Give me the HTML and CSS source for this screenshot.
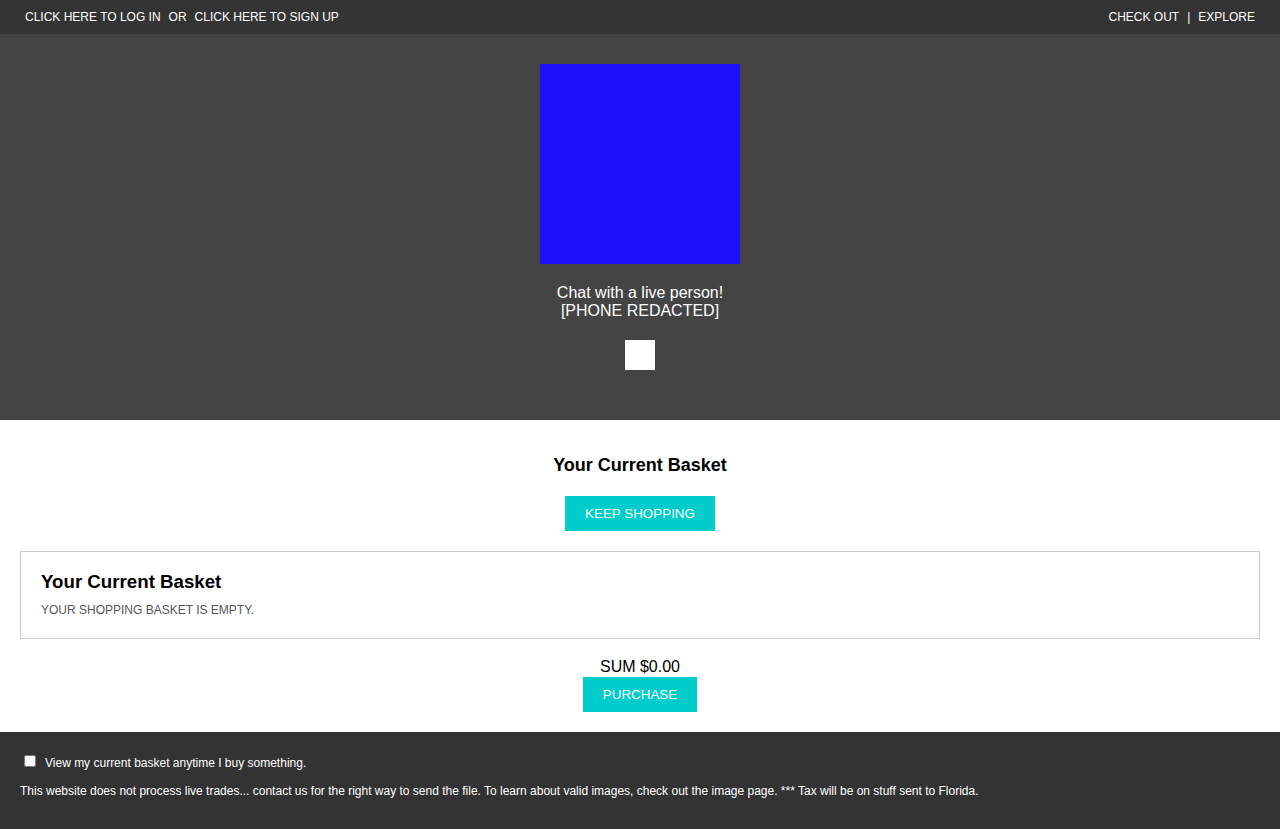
FILE: index.html
```html
<!DOCTYPE html>
<html>
<head>
<meta charset="utf-8">
<link rel="stylesheet" href="styles.css">
</head>
<body>
<div class="topbar">
  <div class="topbar-left">
    <a href="#">CLICK HERE TO LOG IN</a><span class="sep">OR</span><a href="#">CLICK HERE TO SIGN UP</a>
  </div>
  <div class="topbar-right">
    <a href="#">CHECK OUT</a><span class="sep">|</span><a href="#">EXPLORE</a>
  </div>
</div>
<div class="hero">
  <div class="logo"></div>
  <div class="chat">Chat with a live person!<br>[PHONE REDACTED]</div>
  <div class="chat-icon"></div>
</div>
<div class="main">
  <h3 class="title">Your Current Basket</h3>
  <a class="btn btn-keep" href="#">KEEP SHOPPING</a>
  <div class="basket">
    <h2 class="basket-title">Your Current Basket</h2>
    <div class="basket-empty">YOUR SHOPPING BASKET IS EMPTY.</div>
  </div>
  <div class="sum">SUM $0.00</div>
  <a class="btn btn-purchase" href="#">PURCHASE</a>
</div>
<div class="footer">
  <label class="check"><input type="checkbox"> View my current basket anytime I buy something.</label>
  <div class="note">This website does not process live trades... contact us for the right way to send the file. To learn about valid images, check out the image page. *** Tax will be on stuff sent to Florida.</div>
</div>
</body>
</html>
```
FILE: styles.css
```css
* { box-sizing: border-box; }
html, body { margin: 0; padding: 0; }
body {
  font-family: "Liberation Sans", Arial, sans-serif;
  background: #fff;
  color: #000;
}
a { color: inherit; text-decoration: none; }

.topbar {
  height: 34px;
  background: #343434;
  color: #fff;
  font-size: 12px;
  display: flex;
  justify-content: space-between;
  align-items: center;
  padding: 0 25px 0 25px;
}
.topbar .sep { margin: 0 8px; }

.hero {
  background: #444;
  display: flex;
  flex-direction: column;
  align-items: center;
  padding: 30px 0 50px;
  color: #fff;
}
.logo {
  width: 200px;
  height: 200px;
  background: #1e12fe;
}
.chat {
  margin-top: 20px;
  font-size: 16px;
  line-height: 18px;
  text-align: center;
}
.chat-icon {
  margin-top: 20px;
  width: 30px;
  height: 30px;
  background: #fff;
}

.main {
  display: flex;
  flex-direction: column;
  align-items: center;
  padding: 34px 20px 20px;
}
.title {
  margin: 0;
  font-size: 18px;
  line-height: 22px;
  font-weight: bold;
}
.btn {
  display: inline-block;
  background: #00cccc;
  color: #fff;
  font-size: 13.4px;
  height: 35px;
  line-height: 35px;
  padding: 0 20px;
}
.btn-keep { margin-top: 20px; }
.basket {
  align-self: stretch;
  margin-top: 20px;
  border: 1px solid #ccc;
  padding: 20px 20px 21px;
}
.basket-title {
  margin: 0;
  font-size: 18.7px;
  line-height: 20px;
  font-weight: bold;
}
.basket-empty {
  margin-top: 11px;
  font-size: 12px;
  line-height: 14px;
  color: #555;
}
.sum {
  margin-top: 19px;
  font-size: 16px;
  line-height: 18px;
}
.btn-purchase { margin-top: 1px; }

.footer {
  background: #333;
  color: #fff;
  padding: 21px 20px 0;
  height: 97px;
}
.check {
  display: flex;
  align-items: center;
  font-size: 12px;
  line-height: 20px;
  padding-left: 4px;
}
.check input {
  margin: 0 9px 0 0;
  width: 12px;
  height: 12px;
  position: relative;
  top: -2px;
}
.note {
  margin-top: 10px;
  font-size: 12px;
  line-height: 16px;
}
```
